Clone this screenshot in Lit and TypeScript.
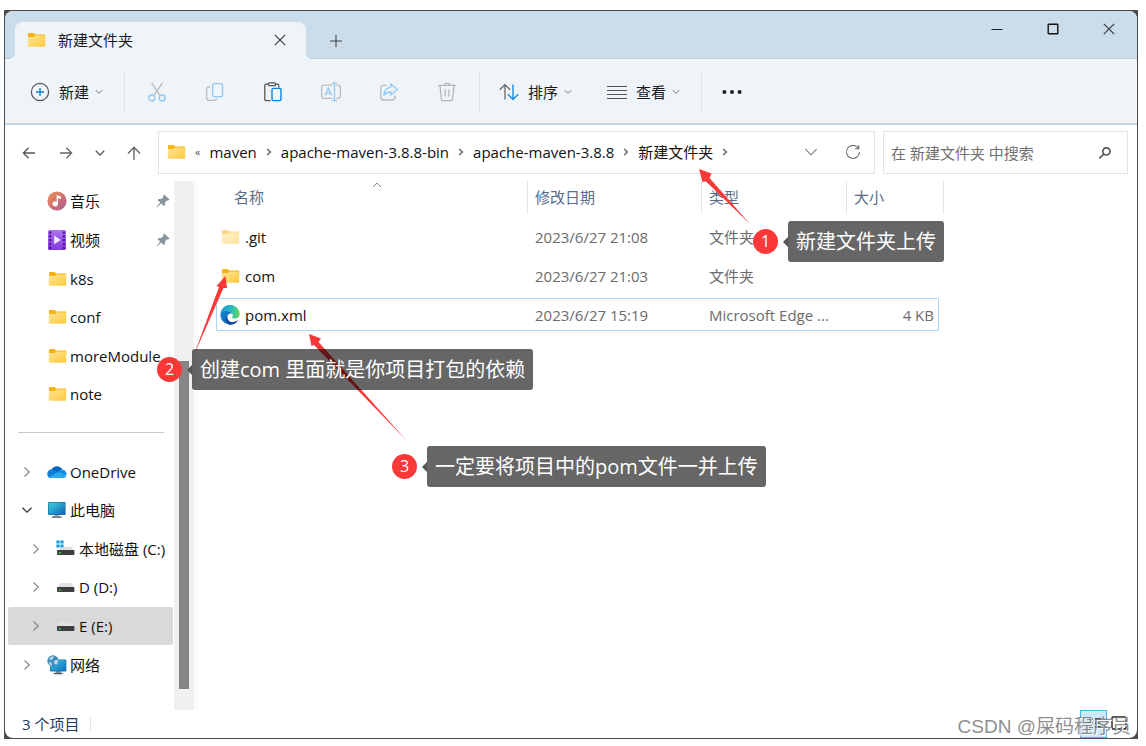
import { LitElement, html, svg, css, nothing } from "lit";
import { customElement, property } from "lit/decorators.js";
import { classMap } from "lit/directives/class-map.js";

const folder = svg`<svg width="19" height="16" viewBox="0 0 19 16">
  <defs><linearGradient id="fg" x1="0" y1="0" x2="1" y2="1"><stop offset="0" stop-color="#ffe59a"/><stop offset="1" stop-color="#ffc93a"/></linearGradient></defs>
  <path d="M1 1.5Q1 1 1.6 1H6.6L8.2 2.4H17.4Q18.2 2.4 18.2 3.2V7H1Z" fill="#f7b416"/>
  <path d="M1 5H7L8.4 3.4H17.6Q18.2 3.4 18.2 4V13.8Q18.2 14.8 17.2 14.8H1.8Q.8 14.8.8 13.8V5.2Z" fill="url(#fg)"/></svg>`;

const icons: Record<string, unknown> = {
  folder,
  music: svg`<svg width="20" height="20" viewBox="0 0 20 20"><defs><linearGradient id="mg" x1="0" y1="0" x2="1" y2="1"><stop offset="0" stop-color="#f09254"/><stop offset=".55" stop-color="#cf6f72"/><stop offset="1" stop-color="#a65ba5"/></linearGradient></defs><circle cx="10" cy="10" r="9.6" fill="url(#mg)"/><path d="M9.6 4L14 5.4V8L11 7.2V13A2.8 2.5 0 1 1 9.6 10.7Z" fill="#fff"/></svg>`,
  video: svg`<svg width="20" height="20" viewBox="0 0 20 20"><defs><linearGradient id="vg" x1="0" y1="0" x2="0" y2="1"><stop offset="0" stop-color="#b072f4"/><stop offset="1" stop-color="#8339dc"/></linearGradient></defs><rect x="1" y="0" width="18" height="20" rx="1.5" fill="url(#vg)"/><path d="M3.2 1.5V19M16.8 1.5V19" stroke="#4c1a8e" stroke-width="2.2" stroke-dasharray="2.2 1.6"/><path d="M7.2 5.6L13.6 10L7.2 14.2Z" fill="#f4edff"/></svg>`,
  onedrive: svg`<svg width="20" height="14" viewBox="0 0 20 14"><path d="M4.4 13A4.2 4.2 0 0 1 4.4 4.7A6 6 0 0 1 15.4 4.8L12 9Z" fill="#0a66c2"/><path d="M0.3 9A4.2 4.2 0 0 1 7 5.2L13 9L5 13H4.4A4.1 4.1 0 0 1 .3 9Z" fill="#0f7fdc"/><path d="M10.8 6.9A5 5 0 0 1 15.8 4.8A4.2 4.2 0 0 1 19.2 7.2L19.6 10L12 12Z" fill="#1490df"/><path d="M2 12.2L11 6.9L19.4 10.7A3 3 0 0 1 16.4 13H4.4A4.5 4.5 0 0 1 2 12.2Z" fill="#29a8ec"/></svg>`,
  pc: svg`<svg width="20" height="18" viewBox="0 0 20 18"><defs><linearGradient id="pg" x1="0" y1="0" x2="1" y2="1"><stop offset="0" stop-color="#3fd3e2"/><stop offset="1" stop-color="#0f62b4"/></linearGradient></defs><path d="M7.4 13H12.2V15.6H7.4Z" fill="#9aa5ad"/><path d="M5 15.4H14.6V16.8H5Z" fill="#4d5a63"/><rect x="1" y="1" width="17.6" height="13" rx="1" fill="#1d6e9b"/><rect x="1.7" y="1.7" width="16.2" height="11.6" fill="url(#pg)"/></svg>`,
  drive: svg`<svg width="20" height="16" viewBox="0 0 20 16"><path d="M4 4H15.6L18 8.4H1.4Z" fill="#dfe1e2"/><rect x="1" y="8" width="17.4" height="5" rx=".8" fill="#3e3e40"/><rect x="2.6" y="10.2" width="2.4" height="1.4" fill="#32c24f"/></svg>`,
  cdrive: svg`<svg width="20" height="18" viewBox="0 0 20 18"><path d="M4 7H15.6L18 11.4H1.4Z" fill="#dcdedf"/><rect x="0" y="0" width="8" height="8" fill="#fff"/><path d="M.4 .6H3.6V3.6H.4ZM4.4.6H7.6V3.6H4.4ZM.4 4.4H3.6V7.4H.4ZM4.4 4.4H7.6V7.4H4.4Z" fill="#1597e5"/><rect x="1" y="10" width="17.4" height="5" rx=".8" fill="#3e3e40"/><rect x="2.6" y="12.2" width="2.4" height="1.4" fill="#32c24f"/></svg>`,
  network: svg`<svg width="20" height="20" viewBox="0 0 20 20"><defs><linearGradient id="ng" x1="0" y1="0" x2="1" y2="1"><stop offset="0" stop-color="#3fc8e2"/><stop offset="1" stop-color="#0f70bc"/></linearGradient></defs><path d="M9 16H13.6V18H9Z" fill="#8d989f"/><path d="M6.6 17.8H15.6V19.2H6.6Z" fill="#4d5a63"/><rect x="3" y="4.4" width="16.4" height="12" rx="1" fill="#1c77ad"/><rect x="3.8" y="5.2" width="14.8" height="10.4" fill="url(#ng)"/><circle cx="6" cy="6" r="5.7" fill="#3d8fc0"/><path d="M2.4 3.4Q5 .6 7 1.4L5.6 4L3 5.6ZM7 6L10.6 4.6Q11.6 7 9.8 9.4L7.4 9ZM1.6 7L4.6 7.8L5 11Q2 10 1.6 7Z" fill="#c2dce8"/></svg>`,
  edge: svg`<svg width="20" height="20" viewBox="0 0 20 20"><defs><linearGradient id="e1" x1="0" y1=".3" x2="1" y2=".4"><stop offset="0" stop-color="#1a9bd7"/><stop offset=".55" stop-color="#2bb9c4"/><stop offset="1" stop-color="#62d957"/></linearGradient><linearGradient id="e2" x1="0" y1="0" x2="1" y2="1"><stop offset="0" stop-color="#158ad8"/><stop offset="1" stop-color="#0d56a8"/></linearGradient></defs><path d="M.5 9.6A9.6 9.6 0 0 1 19.7 9.2C19.8 12 17.4 13.6 15 13.6C12.8 13.6 11.6 12.8 12.4 11.6C13.4 10.2 12.4 7 8.6 7C4.6 7 .7 8.6.5 9.6Z" fill="url(#e1)"/><path d="M.4 10C.6 7.2 3.8 5.6 7.2 6.2C10 6.4 11.8 7.6 12.4 9C9.4 7.6 7 10 7.4 12.6C7.8 16.4 11 19 12.6 19.2A9.6 9.6 0 0 1 .4 10Z" fill="url(#e2)"/><path d="M7.2 11.4C6.8 14.4 9.2 17 12.4 17C15.2 17 16.8 15.8 18.2 15.2A9.6 9.6 0 0 1 10 19.7C6 18.4 4.8 14 7.2 11.4Z" fill="#14489a"/></svg>`,
  chevRight: svg`<svg width="16" height="16" viewBox="0 0 16 16" fill="none" stroke="#8a8a8a" stroke-width="1.2"><path d="M5.5 3.5L10.3 8L5.5 12.5"/></svg>`,
  chevOpen: svg`<svg width="16" height="16" viewBox="0 0 16 16" fill="none" stroke="#333" stroke-width="1.3"><path d="M3.5 5.8L8 10.2L12.5 5.8"/></svg>`,
  pin: svg`<svg width="14" height="14" viewBox="0 0 14 14"><path d="M8.2.6L13.6 5.6L12.4 6.6L10.8 6.6L8.9 8.8L9 11L7.9 12L5.2 9.6L1 13.4L.6 13L4.2 8.6L1.6 6.2L2.6 5L5.2 5.1L7.4 3L7.2 1.6Z" fill="#8896a0"/></svg>`,
  chevSmall: svg`<svg width="8" height="8" viewBox="0 0 8 8" fill="none" stroke="#777" stroke-width="1"><path d="M.8 2.2L4 5.4L7.2 2.2"/></svg>`,
  crumb: svg`<svg width="6" height="10" viewBox="0 0 6 10" fill="none" stroke="#555" stroke-width="1.2"><path d="M1.2 2L4.4 5L1.2 8"/></svg>`,
  add: svg`<svg width="20" height="20" viewBox="0 0 20 20" fill="none"><circle cx="10" cy="10" r="8.6" stroke="#555" stroke-width="1.2"/><path d="M10 6V14M6 10H14" stroke="#0a84dc" stroke-width="1.4"/></svg>`,
  cut: svg`<svg width="20" height="20" viewBox="0 0 20 20" fill="none" stroke-width="1.3"><path d="M4.6 .8L13 13.6M15.4 .8L7 13.6" stroke="#b4b9bd"/><circle cx="4.8" cy="16" r="3" stroke="#8fc6ef"/><circle cx="15.2" cy="16" r="3" stroke="#8fc6ef"/></svg>`,
  copy: svg`<svg width="20" height="20" viewBox="0 0 20 20" fill="none" stroke-width="1.3"><path d="M5 5H4Q1.6 5 1.6 7.4V15.4Q1.6 18.4 4.4 18.4H9Q11.6 18.4 11.6 16" stroke="#b8bcc0"/><rect x="7.6" y="1.6" width="10" height="13" rx="2.2" stroke="#92c8f0"/></svg>`,
  paste: svg`<svg width="20" height="20" viewBox="0 0 20 20" fill="none" stroke-width="1.3"><path d="M7.6 18.6H3.4Q1.8 18.6 1.8 17V3.8Q1.8 2.2 3.4 2.2H5.4M12.6 2.2H14.2Q15.8 2.2 15.8 3.8V5.4" stroke="#555"/><rect x="5.4" y=".8" width="7.2" height="2.8" rx="1.2" stroke="#555"/><rect x="9" y="6.4" width="9" height="12.2" rx="1.4" stroke="#0a84dc" stroke-width="1.4"/></svg>`,
  rename: svg`<svg width="22" height="20" viewBox="0 0 22 20" fill="none" stroke-width="1.3"><path d="M12.6 16.4H4.4Q1.6 16.4 1.6 13.6V6Q1.6 3.2 4.4 3.2H12.6M16.4 3.2H17.6Q20.4 3.2 20.4 6V13.6Q20.4 16.4 17.6 16.4H16.4" stroke="#b8bcc0"/><path d="M12 1.2H17M12 18.6H17M14.5 1.2V18.6M5 13.6L8.2 6L11.4 13.6M6 11.2H10.4" stroke="#92c8f0"/></svg>`,
  share: svg`<svg width="20" height="20" viewBox="0 0 20 20" fill="none" stroke-width="1.3"><path d="M7.6 3.4H4.6Q1.8 3.4 1.8 6.2V15Q1.8 18 4.6 18H13Q16 18 16 15V13.6" stroke="#b8bcc0"/><path d="M11.8 2L18.4 7.6L11.8 13V10Q7.6 9.8 4.8 13.2Q5.8 6 11.8 5.2Z" stroke="#92c8f0" stroke-linejoin="round"/></svg>`,
  trash: svg`<svg width="20" height="20" viewBox="0 0 20 20" fill="none" stroke="#b4b8bb" stroke-width="1.3"><path d="M1.2 3.4H18.8M7.4 3.2Q7.4 1.2 10 1.2T12.6 3.2M3 3.6L4.4 17Q4.6 18.6 6 18.6H14Q15.4 18.6 15.6 17L17 3.6M8.2 7.6V14.4M11.8 7.6V14.4"/></svg>`,
  sort: svg`<svg width="20" height="20" viewBox="0 0 20 20" fill="none" stroke-width="1.3"><path d="M6 17.4V2.6M.8 7.8L6 2.6L11.2 7.8" stroke="#666"/><path d="M14 2.6V17.4M8.8 12.2L14 17.4L19.2 12.2" stroke="#0a84dc"/></svg>`,
  view: svg`<svg width="20" height="20" viewBox="0 0 20 20" stroke="#555" stroke-width="1.2"><path d="M0 4.5H20M0 8.5H20M0 12.5H20M0 16.5H20"/></svg>`,
  more: svg`<svg width="20" height="20" viewBox="0 0 20 20" fill="#222"><circle cx="2.4" cy="10" r="2"/><circle cx="10" cy="10" r="2"/><circle cx="17.6" cy="10" r="2"/></svg>`,
  close: svg`<svg width="12" height="12" viewBox="0 0 12 12" stroke="#333" stroke-width="1.1"><path d="M.8.8L11.2 11.2M11.2.8L.8 11.2"/></svg>`,
  plus: svg`<svg width="12" height="12" viewBox="0 0 12 12" stroke="#444" stroke-width="1.1"><path d="M6 0V12M0 6H12"/></svg>`,
  min: svg`<svg width="12" height="12" viewBox="0 0 12 12" stroke="#222"><path d="M.5 6.5H11.5"/></svg>`,
  max: svg`<svg width="12" height="12" viewBox="0 0 12 12" fill="none" stroke="#111" stroke-width="1.4"><rect x="1.2" y="1.2" width="9.6" height="9.6" rx=".6"/></svg>`,
  back: svg`<svg width="14" height="14" viewBox="0 0 14 14" fill="none" stroke="#555" stroke-width="1.3"><path d="M13 7H1.4M6.6 1.8L1.4 7L6.6 12.2"/></svg>`,
  fwd: svg`<svg width="14" height="14" viewBox="0 0 14 14" fill="none" stroke="#666" stroke-width="1.3"><path d="M1 7H12.6M7.4 1.8L12.6 7L7.4 12.2"/></svg>`,
  recent: svg`<svg width="14" height="14" viewBox="0 0 14 14" fill="none" stroke="#555" stroke-width="1.3"><path d="M2.8 4.8L7 9L11.2 4.8"/></svg>`,
  up: svg`<svg width="14" height="14" viewBox="0 0 14 14" fill="none" stroke="#666" stroke-width="1.4"><path d="M7 14V1.4M1 7.4L7 1.2L13 7.4"/></svg>`,
  drop: svg`<svg width="14" height="14" viewBox="0 0 14 14" fill="none" stroke="#777" stroke-width="1.1"><path d="M1.4 4.2L7 9.8L12.6 4.2"/></svg>`,
  refresh: svg`<svg width="16" height="16" viewBox="0 0 16 16" fill="none" stroke="#6a6a6a" stroke-width="1.1"><path d="M13.6 4.6A6.5 6.5 0 1 0 14.5 8M13.8 1V4.8H10"/></svg>`,
  search: svg`<svg width="14" height="14" viewBox="0 0 14 14" fill="none" stroke="#555" stroke-width="1.7"><circle cx="8.4" cy="5.4" r="3.6"/><path d="M5.8 8L1.4 12.4"/></svg>`,
  asc: svg`<svg width="10" height="6" viewBox="0 0 10 6" fill="none" stroke="#888"><path d="M1 5L5 1L9 5"/></svg>`,
};

@customElement("side-item")
class SideItem extends LitElement {
  @property() icon = "folder";
  @property() label = "";
  @property() expander = "";
  @property({ type: Boolean }) nested = false;
  @property({ type: Boolean }) pinned = false;
  @property({ type: Boolean }) selected = false;
  static styles = css`
    :host { display: flex; flex: 1; min-height: 28px; }
    a { flex: 1; min-width: 0; display: flex; align-items: center; padding-left: 11px; padding-right: 3px;
      color: #111; text-decoration: none; white-space: nowrap; border-radius: 2px; }
    svg { display: block; }
    .nested { padding-left: 20px; }
    .selected { background: #d9d9d9; }
    .exp { width: 16px; margin-right: 12px; display: flex; }
    .ico { width: 20px; margin-right: 3px; display: flex; justify-content: center; }
    .label { flex: 1; }
    .pin { display: flex; }
  `;
  render() {
    return html`<a href="#" class=${classMap({ nested: this.nested, selected: this.selected })}>
      <span class="exp">${this.expander ? icons[this.expander] : nothing}</span>
      <span class="ico">${icons[this.icon]}</span>
      <span class="label">${this.label}</span>
      ${this.pinned ? html`<span class="pin">${icons.pin}</span>` : nothing}
    </a>`;
  }
}

@customElement("callout-note")
class CalloutNote extends LitElement {
  @property() num = "";
  @property() text = "";
  static styles = css`
    :host { display: flex; align-items: center; white-space: nowrap; }
    .num { width: 25px; height: 25px; line-height: 24px; border-radius: 50%; background: #fb3838; color: #fff;
      text-align: center; font-size: 16px; }
    .tri { margin-left: 5px; border: 5px solid transparent; border-left-width: 0; border-right-color: #555; }
    .box { background: rgba(0, 0, 0, 0.6); color: #fff; font-size: 20px; line-height: 28px; padding: 7px 8px 6px;
      border-radius: 3px; }
  `;
  render() {
    return html`<span class="num">${this.num}</span><span class="tri"></span><span class="box">${this.text}</span>`;
  }
}

const files = [
  { icon: "folder", name: ".git", date: "2023/6/27 21:08", type: "文件夹", size: "", dim: true },
  { icon: "folder", name: "com", date: "2023/6/27 21:03", type: "文件夹", size: "" },
  { icon: "edge", name: "pom.xml", date: "2023/6/27 15:19", type: "Microsoft Edge ...", size: "4 KB", selected: true },
];
const crumbs = ["maven", "apache-maven-3.8.8-bin", "apache-maven-3.8.8", "新建文件夹"];
const tools = [["cut", "剪切"], ["copy", "复制"], ["paste", "粘贴"], ["rename", "重命名"], ["share", "共享"], ["trash", "删除"]];

@customElement("app-root")
class AppRoot extends LitElement {
  static styles = css`
    * { box-sizing: border-box; }
    :host { display: flex; position: relative; box-sizing: border-box; min-height: 100vh; padding: 10px 8px 7px 4px; background: #fff;
      font: 15px/20px "Open Sans", "Noto Sans CJK SC", sans-serif; color: #1b1b1b; }
    button { font: inherit; color: inherit; border: 0; background: none; padding: 0; display: flex; align-items: center;
      justify-content: center; white-space: nowrap; }
    svg { display: block; flex: none; }
    .frame { flex: 1; min-width: 0; display: flex; background: #4a4c4e; padding: 1px; }
    .window { flex: 1; min-width: 0; display: flex; flex-direction: column; background: #fff; border-radius: 8px; overflow: hidden; }
    .titlebar { display: flex; height: 48px; background: #cbdceb; border-bottom: 1px solid #bccfdf; padding-left: 10px; }
    .tab { position: relative; width: 291px; height: 37px; margin-top: 11px; background: #eff4f9; border-radius: 8px 8px 0 0; display: flex;
      align-items: center; padding: 0 20px 1px 12px; gap: 12px; }
    .tab::before, .tab::after { content: ""; position: absolute; bottom: 0; width: 6px; height: 6px; }
    .tab::before { left: -6px; background: radial-gradient(circle at 0 0, transparent 6px, #eff4f9 6px); }
    .tab::after { right: -6px; background: radial-gradient(circle at 100% 0, transparent 6px, #eff4f9 6px); }
    .tab .title { flex: 1; }
    .newtab { width: 36px; height: 36px; margin: 12px 0 0 12px; }
    .winbtns { margin-left: auto; display: flex; height: 35px; }
    .winbtns button { width: 56px; }
    .commands { display: flex; align-items: center; gap: 1px; height: 66px; background: #eff4f9; border-bottom: 2px solid #c3d5e3;
      padding: 1px 0 0 9px; }
    .cmd { height: 38px; padding: 0 18px 0 16px; }
    .cmd .txt { margin: 0 6px 0 9px; }
    .tool { width: 58px; height: 38px; }
    .more { width: 54px; height: 38px; }
    .tools { display: flex; }
    .sep { width: 1px; height: 38px; margin: 0 2px; background: #dde2e7; }
    .navrow { display: flex; align-items: center; padding: 6px 9px 7px 13px; gap: 8px; }
    .arrows { display: flex; margin-right: 2px; }
    .arrows button { width: 21px; height: 40px; }
    .arrows .b1 { width: 54px; }
    .arrows .b2 { width: 13px; }
    .arrows .b3 { width: 42px; padding-left: 13px; }
    .address, .search { height: 43px; border: 1px solid #e3e3e3; display: flex; align-items: center; }
    .address { flex: 1; min-width: 0; padding: 0 11px 1px 8px; }
    .crumbs { flex: 1; min-width: 0; overflow: hidden; display: flex; align-items: center; gap: 9px; color: #111; }
    .crumbs a { color: inherit; text-decoration: none; white-space: nowrap; }
    .laquo { font-size: 11px; color: #555; line-height: 16px; }
    .address button { width: 42px; height: 40px; }
    .address button.r { width: 20px; margin-left: 11px; }
    .search { width: 245px; padding: 0 15px 0 7px; }
    .search input { flex: 1; min-width: 0; border: 0; outline: 0; padding: 0; font: inherit; background: none; }
    .search input::placeholder { color: #707070; opacity: 1; }
    .main { flex: 1; display: flex; min-height: 0; }
    .side { width: 168px; display: flex; flex-direction: column; padding: 1px 0 26px 3px; margin-right: 1px; }
    .rule { flex: 1; min-height: 28px; display: flex; align-items: center; padding: 0 9px 0 10px; }
    .rule hr { flex: 1; margin: 0; border: 0; height: 1px; background: #c9c9c9; }
    .track { width: 20px; background: #f0f0f0; display: flex; flex-direction: column; padding: 180px 5px 21px; }
    .thumb { flex: 1; background: #868686; }
    .files { flex: 1; min-width: 0; border-left: 1px solid #f4f4f4; margin-left: 2px; padding-left: 19px; }
    table { display: block; }
    thead, tbody { display: grid; gap: 6px; justify-content: start; }
    tbody { padding-top: 6px; }
    tr { display: grid; grid-template-columns: 312px 174px 145px 90px; align-items: center; }
    thead tr { grid-template-columns: 312px 174px 145px 97px; }
    th { position: relative; font-weight: 400; text-align: left; height: 33px; line-height: 32px; padding: 0 0 0 7px;
      border-right: 1px solid #e4e4e4; color: #5a6c86; }
    th:first-child { padding-left: 18px; }
    .asc { position: absolute; left: 156px; top: 1px; }
    td { padding: 0 5px 0 6px; color: #6b6b6b; white-space: nowrap; }
    tbody tr { height: 33px; border: 1px solid transparent; }
    tbody tr.selected { border-color: #a9d7f7; border-radius: 1px; }
    td.name { display: flex; align-items: center; gap: 5px; padding-left: 3px; color: #111; }
    td.name .i { width: 20px; display: flex; justify-content: center; }
    td.size { text-align: right; padding-right: 4px; }
    .dim { opacity: 0.5; }
    .status { display: flex; align-items: center; height: 28px; padding: 0 10px 0 17px; color: #23395d; }
    .status .bar { width: 1px; height: 14px; background: #e4e4e4; margin-left: 11px; }
    .modes { margin-left: auto; display: flex; align-self: stretch; gap: 4px; }
    .modes button { width: 27px; }
    .modes button.on { background: #cde8f7; border: 1px solid #4db4e6; }
    .modes button.last { width: 16px; }
    .overlay { position: absolute; inset: 0; pointer-events: none; }
    .overlay svg { position: absolute; left: 0; top: 0; }
    .overlay callout-note { position: absolute; }
    .n1 { left: 753px; top: 221px; }
    .n2 { left: 157px; top: 349px; }
    .n3 { left: 392px; top: 446px; }
    .mark { position: absolute; right: 15px; bottom: 6px; font-size: 19px; line-height: 26px; color: rgba(120, 120, 120, 0.85);
      text-shadow: 1px 1px 0 #fff; font-family: "Liberation Sans", "Noto Sans CJK SC", sans-serif; }
  `;

  render() {
    return html`
      <div class="frame"><div class="window">
        <header class="titlebar">
          <div class="tab">${icons.folder}<span class="title">新建文件夹</span><button aria-label="关闭标签页">${icons.close}</button></div>
          <button class="newtab" aria-label="新标签页">${icons.plus}</button>
          <div class="winbtns">
            <button aria-label="最小化">${icons.min}</button>
            <button aria-label="最大化">${icons.max}</button>
            <button aria-label="关闭">${icons.close}</button>
          </div>
        </header>
        <div class="commands">
          ${this.command("add", "新建")}
          <span class="sep"></span>
          <div class="tools">${tools.map(([i, l]) => html`<button class="tool" aria-label=${l}>${icons[i]}</button>`)}</div>
          <span class="sep"></span>
          ${this.command("sort", "排序")}
          ${this.command("view", "查看")}
          <span class="sep"></span>
          <button class="more" aria-label="更多">${icons.more}</button>
        </div>
        <div class="navrow">
          <div class="arrows">
            <button aria-label="后退">${icons.back}</button>
            <button class="b1" aria-label="前进">${icons.fwd}</button>
            <button class="b2" aria-label="最近">${icons.recent}</button>
            <button class="b3" aria-label="上移">${icons.up}</button>
          </div>
          <div class="address">
            <nav class="crumbs">
              ${icons.folder}<span class="laquo">«</span>
              ${crumbs.map((c) => html`<a href="#">${c}</a>${icons.crumb}`)}
            </nav>
            <button aria-label="历史">${icons.drop}</button>
            <button class="r" aria-label="刷新">${icons.refresh}</button>
          </div>
          <label class="search">
            <input type="text" aria-label="搜索" placeholder="在 新建文件夹 中搜索" />${icons.search}
          </label>
        </div>
        <div class="main">
          <nav class="side">
            <side-item icon="music" label="音乐" pinned></side-item>
            <side-item icon="video" label="视频" pinned></side-item>
            <side-item label="k8s"></side-item>
            <side-item label="conf"></side-item>
            <side-item label="moreModule"></side-item>
            <side-item label="note"></side-item>
            <div class="rule"><hr /></div>
            <side-item icon="onedrive" label="OneDrive" expander="chevRight"></side-item>
            <side-item icon="pc" label="此电脑" expander="chevOpen"></side-item>
            <side-item icon="cdrive" label="本地磁盘 (C:)" expander="chevRight" nested></side-item>
            <side-item icon="drive" label="D (D:)" expander="chevRight" nested></side-item>
            <side-item icon="drive" label="E (E:)" expander="chevRight" nested selected></side-item>
            <side-item icon="network" label="网络" expander="chevRight"></side-item>
          </nav>
          <div class="track"><div class="thumb"></div></div>
          <section class="files">
            <table>
              <thead><tr><th>名称<span class="asc">${icons.asc}</span></th><th>修改日期</th><th>类型</th><th>大小</th></tr></thead>
              <tbody>
                ${files.map((f) => html`<tr class=${classMap({ selected: !!f.selected })}>
                  <td class="name"><span class=${classMap({ i: true, dim: !!f.dim })}>${icons[f.icon]}</span>${f.name}</td>
                  <td>${f.date}</td><td>${f.type}</td><td class="size">${f.size}</td>
                </tr>`)}
              </tbody>
            </table>
          </section>
        </div>
        <footer class="status">
          <span>3 个项目</span><span class="bar"></span>
          <div class="modes">
            <button class="on" aria-label="详细信息"><svg width="16" height="16" viewBox="0 0 16 16" stroke="#222" stroke-width="1.4"><path d="M1 3H7M9 3H15M1 7H7M9 7H15M1 11H7M9 11H15"/></svg></button>
            <button class="last" aria-label="大图标"><svg width="16" height="16" viewBox="0 0 16 16" fill="none" stroke="#222" stroke-width="1.4"><rect x="1" y="1" width="14" height="12" rx="1"/></svg></button>
          </div>
        </footer>
      </div></div>
      <div class="overlay">
        <svg width="1146" height="746" viewBox="0 0 1146 746" fill="#fb3838">
          <path d="M699 169L711.5 173.5L709.5 178L750 224L706 181.5L702.5 182Z"/>
          <path d="M225.5 276L227 288L223.5 288L193.5 356L219 287L216.5 286Z"/>
          <path d="M309 334L321 338.5L318.5 342L407 441L314 345L311.5 346Z"/>
        </svg>
        <callout-note class="n1" num="1" text="新建文件夹上传"></callout-note>
        <callout-note class="n2" num="2" text="创建com 里面就是你项目打包的依赖"></callout-note>
        <callout-note class="n3" num="3" text="一定要将项目中的pom文件一并上传"></callout-note>
        <span class="mark">CSDN @屎码程序员</span>
      </div>`;
  }

  private command(icon: string, label: string) {
    return html`<button class="cmd">${icons[icon]}<span class="txt">${label}</span>${icons.chevSmall}</button>`;
  }
}
